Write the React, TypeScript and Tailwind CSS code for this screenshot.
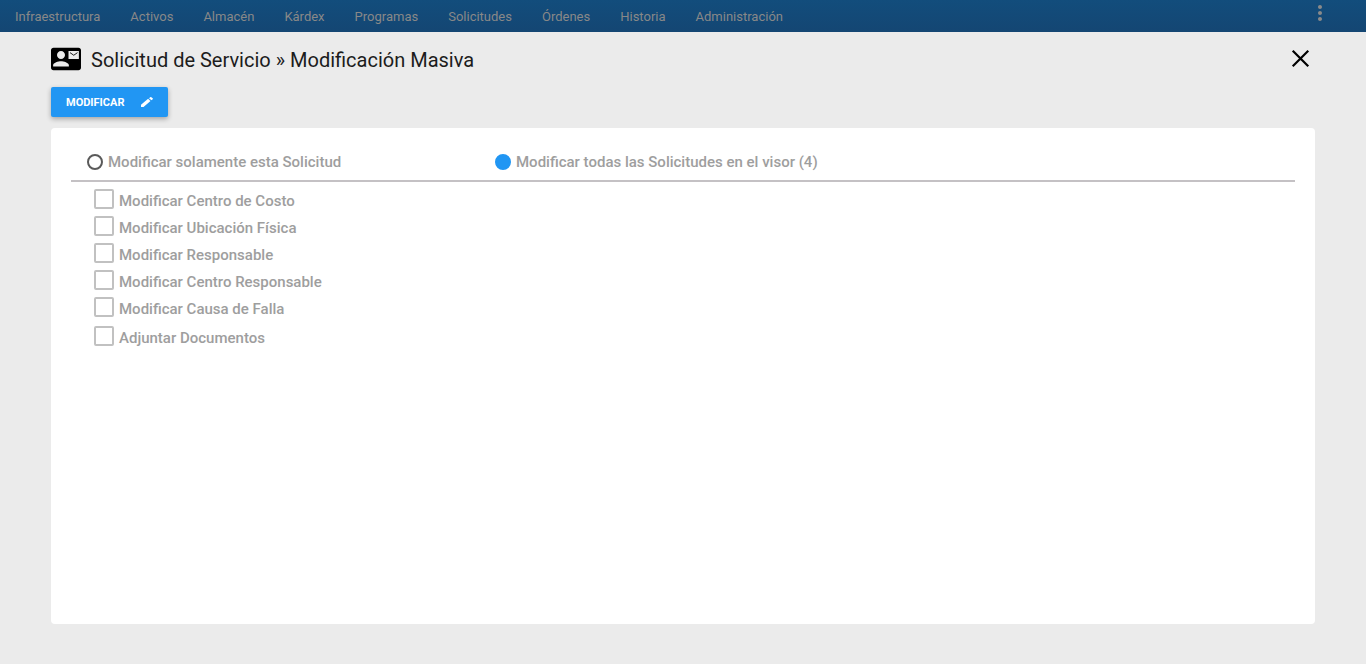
import { useState } from "react";
import { MdMoreVert } from "react-icons/md";

const menu = [
  "Infraestructura",
  "Activos",
  "Almacén",
  "Kárdex",
  "Programas",
  "Solicitudes",
  "Órdenes",
  "Historia",
  "Administración",
];

const scopes = [
  { value: "one", label: "Modificar solamente esta Solicitud" },
  { value: "all", label: "Modificar todas las Solicitudes en el visor (4)" },
];

const fields = [
  "Modificar Centro de Costo",
  "Modificar Ubicación Física",
  "Modificar Responsable",
  "Modificar Centro Responsable",
  "Modificar Causa de Falla",
];

function ContactMailIcon() {
  return (
    <svg viewBox="0 0 24 24" className="mb-0.5 size-[30px]" fill="currentColor" aria-hidden="true">
      <path d="M22 3H2C.9 3 0 3.9 0 5v14c0 1.1.9 2 2 2h20c1.1 0 1.99-.9 1.99-2L24 5c0-1.1-.9-2-2-2zM8 5.6c1.8 0 3.2 1.4 3.2 3.2S9.800 12 8 12s-3.200-1.400-3.200-3.200S6.200 5.600 8 5.600zm6.300 12.400H1.700v-1c0-2 4.200-3.200 6.300-3.200s6.300 1.200 6.300 3.200v1zm8-6H14V5.600h8.300V12z" />
      <path d="M15.200 6.900l3 2.100 3-2.100" fill="none" stroke="currentColor" strokeWidth="0.7" />
    </svg>
  );
}

function PencilIcon() {
  return (
    <svg viewBox="0 0 12 10" className="h-2.5 w-3" fill="currentColor" aria-hidden="true">
      <path d="M0 7.800V10h2.500L9.500 4 7.100 1.800zM11.700 2.200c.3-.25.3-.6 0-.85L10.300.2c-.3-.25-.7-.25-1 0L8 1.200l2.500 2.100z" />
    </svg>
  );
}

function CloseIcon() {
  return (
    <svg viewBox="0 0 30 30" className="size-[30px]" fill="none" stroke="currentColor" strokeWidth="2.2" aria-hidden="true">
      <path d="M8.500 7.500l14 14M22.500 7.500l-14 14" strokeLinecap="square" />
    </svg>
  );
}

function TopBar() {
  return (
    <header className="flex h-8 items-center justify-between bg-linear-to-b from-[#124d7c] to-[#144673] pr-[34px] pl-[15px]">
      <nav className="flex gap-[30px] pt-px text-[13px] font-normal text-[#888888]">
        {menu.map((item) => (
          <a key={item} href="#">
            {item}
          </a>
        ))}
      </nav>
      <button type="button" aria-label="Más opciones" className="mb-1.5 text-[#8a8a8a]">
        <MdMoreVert size={24} />
      </button>
    </header>
  );
}

function CheckRow({ label }: { label: string }) {
  return (
    <label className="flex h-[27px] items-start gap-[5px]">
      <input
        type="checkbox"
        className="size-5 appearance-none rounded-xs border-2 border-[#c1c1c1] checked:border-[#2196f3] checked:bg-[#2196f3]"
      />
      <span className="pt-0.5 leading-5">{label}</span>
    </label>
  );
}

export default function App() {
  const [scope, setScope] = useState("all");

  return (
    <div className="flex min-h-screen flex-col bg-[#ebebeb] font-['Roboto',sans-serif]">
      <TopBar />

      <main className="flex flex-1 flex-col px-[51px] pb-10">
        <div className="flex h-[55px] items-center justify-between">
          <div className="flex items-center gap-2.5">
            <ContactMailIcon />
            <h1 className="text-[20px] leading-6 font-normal text-[#1c1c1c]">Solicitud de Servicio » Modificación Masiva</h1>
          </div>
          <button type="button" aria-label="Cerrar" className="mb-0.5 text-black">
            <CloseIcon />
          </button>
        </div>

        <button
          type="button"
          className="flex h-[30px] items-center gap-[17px] self-start rounded-xs bg-[#2196f3] px-[15px] text-[11px] font-bold text-white shadow-[0_2px_5px_rgba(0,0,0,0.3)]"
        >
          <span className="pt-0.5">MODIFICAR</span>
          <PencilIcon />
        </button>

        <section className="mt-[11px] flex-1 rounded bg-white px-5 pt-6 text-[15px] font-medium text-[#9e9e9e]">
          <div role="radiogroup" className="grid grid-cols-3 border-b-2 border-[#c4c1c4] pb-2">
            {scopes.map((item) => (
              <label key={item.value} className="flex items-center gap-[5px] pl-4">
                <input
                  type="radio"
                  name="scope"
                  value={item.value}
                  checked={scope === item.value}
                  onChange={() => setScope(item.value)}
                  className="size-4 appearance-none rounded-full border-2 border-[#5a5a5a] checked:border-[#2196f3] checked:bg-[#2196f3]"
                />
                <span className="leading-5">{item.label}</span>
              </label>
            ))}
          </div>

          <div className="flex flex-col pt-[7px] pl-[23px]">
            {fields.map((label) => (
              <CheckRow key={label} label={label} />
            ))}
            <div className="pt-0.5">
              <CheckRow label="Adjuntar Documentos" />
            </div>
          </div>
        </section>
      </main>
    </div>
  );
}
